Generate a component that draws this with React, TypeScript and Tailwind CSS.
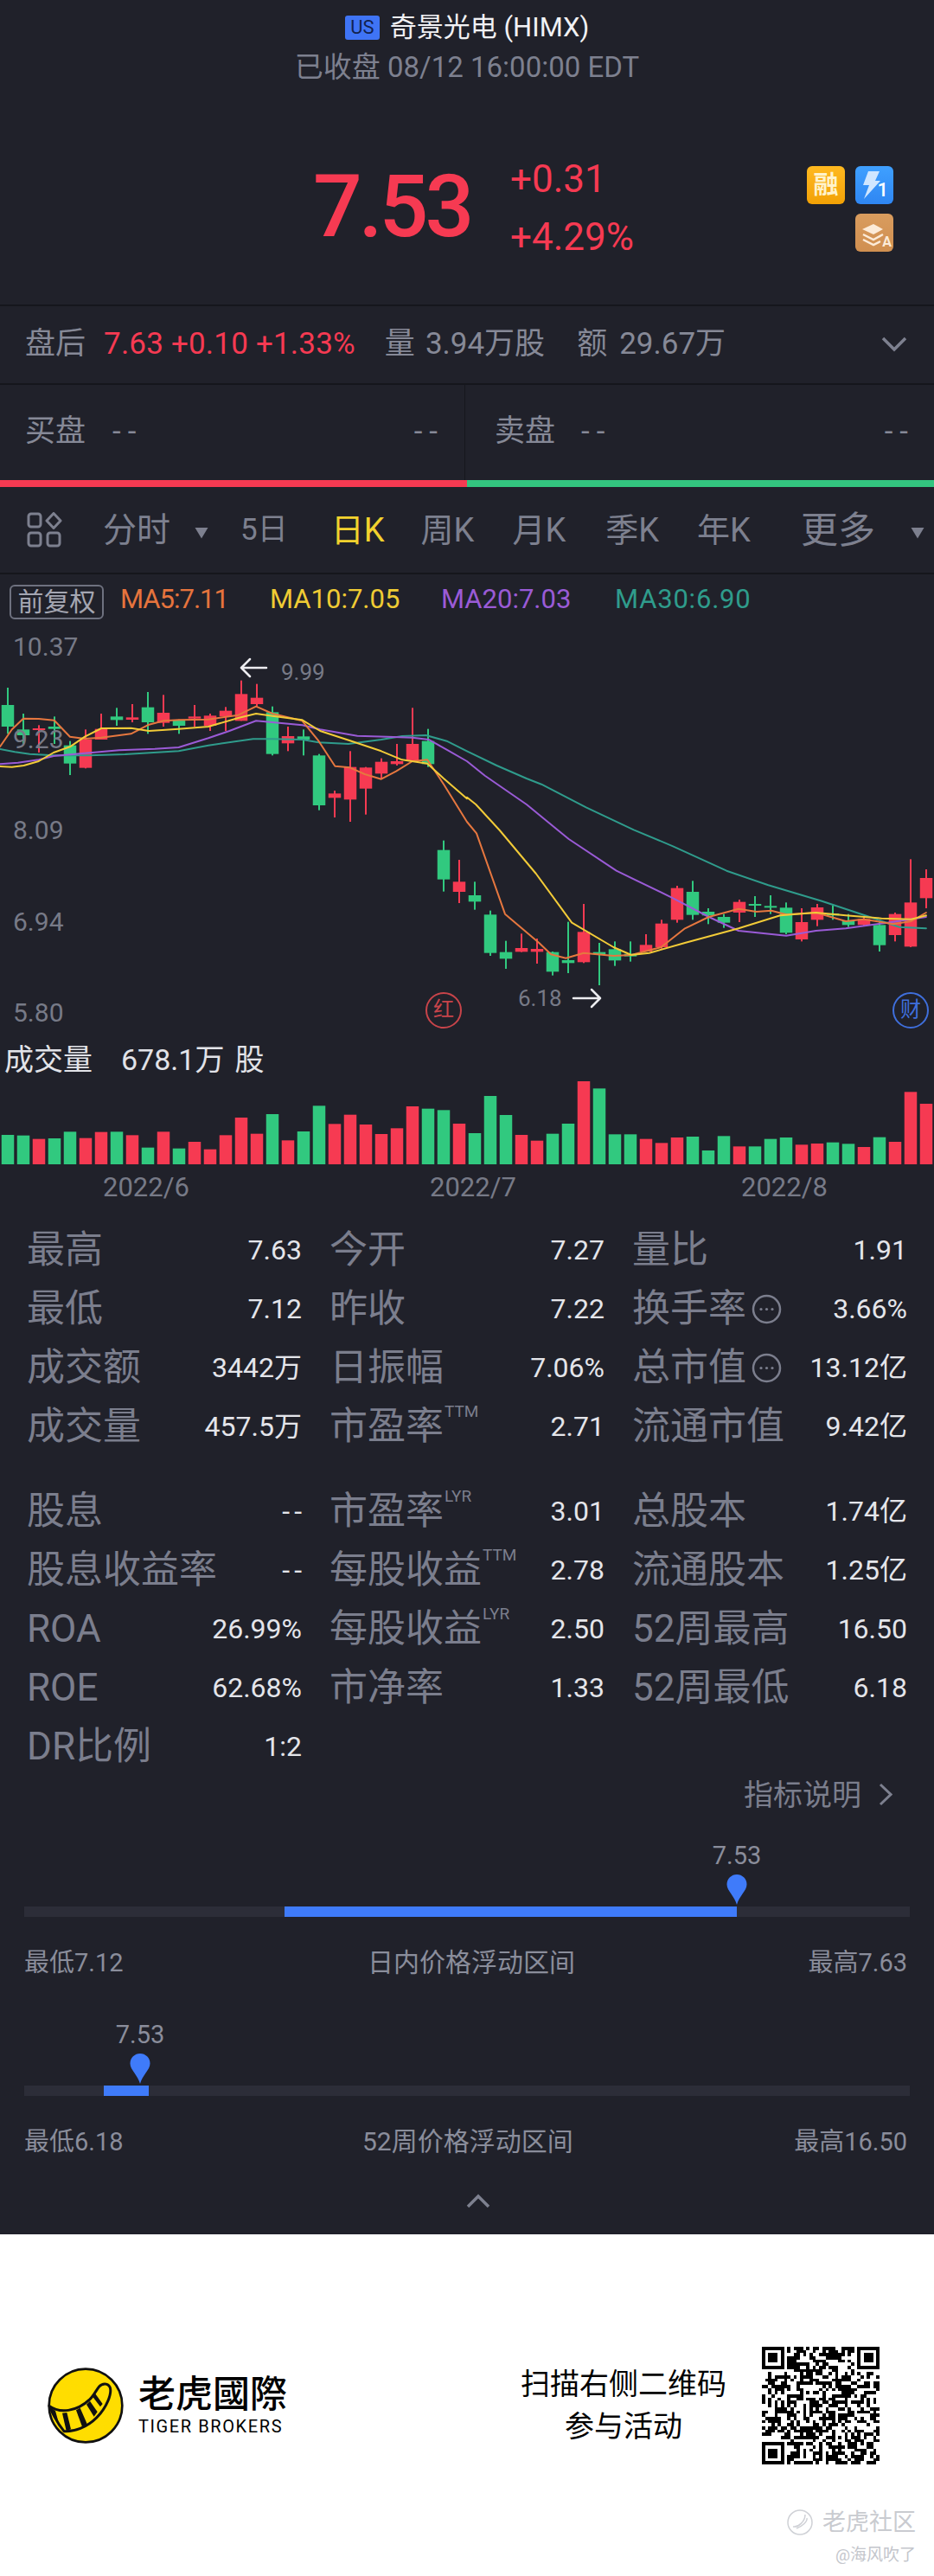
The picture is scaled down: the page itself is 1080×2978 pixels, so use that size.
import React from "react";

const RED = "#F63A52";
const GREEN = "#31C97F";

const z3 = (x: number, y: number) => [x / 2.904, 660 + y / 3];
const z4 = (x: number, y: number) => [540 + x / 2.904, 660 + y / 3];
const z5 = (x: number, y: number) => [x / 1.452, 950 + y / 3];

type Pts = number[][];
const poly = (list: [typeof z3, Pts][]) =>
  list
    .flatMap(([f, pts]) => pts.map((p) => f(p[0], p[1])))
    .map((p) => `${p[0].toFixed(1)},${p[1].toFixed(1)}`)
    .join(" ");

const ma5 = poly([
  [z3, [[0,610],[40,550],[78,512],[130,513],[182,518],[235,575],[285,582],[340,578],[440,565],[500,533],[550,520],[600,517],[700,515],[800,500],[860,470],[915,495],[1015,520],[1070,590],[1125,677],[1175,682],[1225,705],[1280,722],[1330,695],[1385,660],[1435,655],[1490,740],[1568,870]]],
  [z5, [[800,40],[848,320],[905,420],[925,460],[950,473],[980,455],[1030,465],[1060,462],[1110,435],[1150,370],[1190,330],[1240,302],[1270,312],[1295,308],[1320,322],[1370,315],[1420,345],[1450,338],[1500,355],[1530,345],[1555,315]]],
]);
const ma10 = poly([
  [z3, [[0,678],[40,680],[80,675],[130,660],[180,630],[235,610],[285,575],[340,546],[440,545],[500,555],[600,548],[700,540],[800,510],[860,495],[915,503],[1015,517],[1075,555],[1180,590],[1280,625],[1350,655],[1435,668],[1490,720],[1568,790]]],
  [z4, [[0,785],[30,810],[110,900]]],
  [z5, [[900,180],[960,350],[1030,435],[1060,462],[1090,455],[1150,420],[1240,370],[1310,325],[1370,315],[1420,325],[1480,335],[1530,338],[1555,325]]],
]);
const ma20 = poly([
  [z3, [[0,670],[60,665],[130,655],[180,642],[285,632],[400,622],[520,617],[600,612],[700,580],[770,555],[860,520],[915,525],[1015,535],[1075,550],[1200,572],[1300,575],[1385,578],[1440,585],[1500,620],[1568,660]]],
  [z4, [[60,710],[200,810],[300,895]]],
  [z5, [[955,60],[1035,170],[1130,265],[1190,330],[1240,378],[1320,395],[1370,378],[1420,370],[1490,350],[1555,330]]],
]);
const ma30 = poly([
  [z3, [[0,618],[50,628],[100,635],[180,640],[300,640],[420,636],[600,625],[700,605],[850,583],[915,583],[1015,585],[1070,595],[1170,600],[1280,585],[1350,573],[1430,570],[1500,590],[1568,625]]],
  [z4, [[100,675],[200,720],[250,740],[400,820],[560,898]]],
  [z5, [[1130,85],[1220,170],[1290,220],[1380,275],[1460,330],[1510,365],[1555,370]]],
]);

// color, wick top, body top, body bottom, wick bottom
type C = [string, number, number, number, number];
const candlesA: C[] = [
  ["g",405,465,540,565],["g",495,550,570,600],["r",535,546,552,630],["g",505,540,548,600],
  ["g",590,605,668,708],["r",550,585,683,685],["r",495,548,585,585],["g",475,505,517,537],
  ["r",462,508,516,525],["g",420,473,525,565],["r",430,492,527,540],["g",515,518,537,565],
  ["r",465,505,512,540],["r",495,502,537,555],["r",472,485,505,555],["r",380,427,520,520],
  ["r",392,440,462,470],["g",470,490,635,640],["r",540,573,598,625],["g",550,574,585,640],
  ["g",635,640,813,830],["r",762,772,787,855],["r",625,680,793,870],["r",680,682,755,845],
  ["r",650,662,703,720],["r",600,660,670,675],["r",475,600,660,660],["g",548,590,670,680],
];
const candlesB: C[] = [
  ["g",65,98,200,242],["r",132,208,243,282],["g",208,255,277,305],["g",308,322,455,465],
  ["g",413,452,475,510],["r",388,438,451,452],["r",405,441,451,492],["g",450,452,520,533],
  ["g",347,480,490,525],["r",285,382,487,490],["g",420,452,460,567],["g",415,442,481,500],
  ["g",415,458,467,485],["r",390,427,450,450],["r",340,353,435,440],["r",222,230,340,350],
  ["g",205,243,323,340],["g",300,312,325,355],["g",320,330,350,368],["r",270,278,315,348],
  ["g",258,285,290,330],["g",255,292,296,320],["g",280,298,385,390],["r",300,348,408,415],
  ["r",285,297,340,362],["g",290,318,325,340],["g",320,342,358,365],["r",330,337,358,360],
  ["g",345,358,428,450],["r",315,320,393,415],["r",130,280,433,435],["r",165,195,265,300],
];
const candles = [
  ...candlesA.map((c) => ({ c: c[0], v: c.slice(1).map((n) => 660 + (n as number) / 3) })),
  ...candlesB.map((c) => ({ c: c[0], v: c.slice(1).map((n) => 950 + (n as number) / 3) })),
];

const volumes: [string, number][] = [
  ["g",1086],["g",1088],["r",1100],["g",1098],["g",1075],["r",1097],["r",1076],["g",1075],["r",1087],["g",1130],
  ["r",1075],["g",1133],["r",1110],["r",1136],["r",1087],["r",1026],["r",1082],["g",1014],["r",1105],["g",1074],
  ["g",985],["r",1048],["r",1016],["r",1050],["r",1083],["r",1063],["r",987],["g",995],["g",1000],["r",1047],
  ["g",1080],["g",951],["g",1017],["r",1086],["r",1106],["g",1082],["g",1047],["r",876],["g",925],["g",1084],
  ["g",1084],["r",1100],["r",1114],["r",1095],["g",1092],["g",1140],["g",1090],["r",1126],["g",1126],["g",1100],
  ["g",1095],["r",1120],["r",1116],["g",1112],["g",1117],["r",1128],["g",1094],["r",1110],["r",937],["r",978],
];

function qrPath() {
  const n = 37;
  let s = 0x2f6e2b1;
  const rnd = () => {
    s ^= s << 13; s ^= s >>> 17; s ^= s << 5;
    return (s >>> 0) / 4294967296;
  };
  let d = "";
  const inFinder = (x: number, y: number) =>
    (x < 8 && y < 8) || (x >= n - 8 && y < 8) || (x < 8 && y >= n - 8);
  for (let y = 0; y < n; y++)
    for (let x = 0; x < n; x++) {
      const r = rnd();
      if (!inFinder(x, y) && r < 0.52) d += `M${x} ${y}h1v1h-1z`;
    }
  const finder = (x: number, y: number) => {
    d += `M${x} ${y}h7v1h-7zM${x} ${y + 6}h7v1h-7zM${x} ${y + 1}h1v5h-1zM${x + 6} ${y + 1}h1v5h-1zM${x + 2} ${y + 2}h3v3h-3z`;
  };
  finder(0, 0);
  finder(n - 7, 0);
  finder(0, n - 7);
  return d;
}
const QR = qrPath();

function Triangle({ className }: { className: string }) {
  return (
    <svg className={className} width="16" height="14" viewBox="0 0 16 14">
      <path d="M0.5 1 L15.5 1 L8 13.5 Z" fill="#7D808F" />
    </svg>
  );
}

function PriceChart() {
  return (
    <svg className="block w-full h-full" viewBox="0 720 1080 480">
      {candles.map((k, i) => {
        const x = 9 + 18 * i;
        const col = k.c === "r" ? RED : GREEN;
        return (
          <g key={i}>
            <rect x={x - 1} y={k.v[0]} width="2" height={k.v[3] - k.v[0]} fill={col} />
            <rect x={x - 7.25} y={k.v[1]} width="14.5" height={Math.max(k.v[2] - k.v[1], 2)} fill={col} />
          </g>
        );
      })}
      <g fill="none" strokeWidth="2" strokeLinejoin="round" strokeLinecap="round">
        <polyline points={ma30} stroke="#2F9C8C" />
        <polyline points={ma20} stroke="#9A5BD6" />
        <polyline points={ma5} stroke="#E6773F" />
        <polyline points={ma10} stroke="#F2CB38" />
      </g>
      <g fill="none" stroke="#ECECF0" strokeWidth="2.5" strokeLinecap="round" strokeLinejoin="round">
        <path d="M279 772H308M289 762L279 772L289 782" />
        <path d="M663 1154H694M684 1144L694 1154L684 1164" />
      </g>
    </svg>
  );
}

function VolumeChart() {
  return (
    <svg className="block w-full h-full" viewBox="0 1250 1080 96">
      {volumes.map(([c, z], i) => {
        const y = 950 + z / 3;
        return <rect key={i} x={1.75 + 18 * i} y={y} width="14.5" height={1346 - y} fill={c === "r" ? RED : GREEN} />;
      })}
    </svg>
  );
}

const YLabel = ({ top, children }: { top: string; children: React.ReactNode }) => (
  <span className={`absolute left-[15px] text-[30px] leading-[36px] text-[#777A87] ${top}`}>{children}</span>
);

type Stat = { l: string; v: string; sup?: string; info?: boolean };

function InfoIcon() {
  return (
    <svg className="ml-[6px] shrink-0" width="35" height="35" viewBox="0 0 35 35">
      <circle cx="17.5" cy="17.5" r="15.5" fill="none" stroke="#7B7E8D" strokeWidth="2.5" />
      <circle cx="11" cy="17.5" r="1.6" fill="#7B7E8D" />
      <circle cx="17.5" cy="17.5" r="1.6" fill="#7B7E8D" />
      <circle cx="24" cy="17.5" r="1.6" fill="#7B7E8D" />
    </svg>
  );
}

function StatCell({ s }: { s?: Stat }) {
  if (!s) return <div />;
  return (
    <div className="h-[68px] flex items-center justify-between">
      <div className="flex items-center text-[44px] leading-[68px] text-[#7B7E8D] whitespace-nowrap">
        <span>{s.l}</span>
        {s.sup && <span className="self-start text-[19px] leading-[28px] mt-[3px] ml-[1px]">{s.sup}</span>}
        {s.info && <InfoIcon />}
      </div>
      {s.v === "--" ? (
        <span className="text-[32px] leading-[68px] text-[#E4E5EA] tracking-[5px] mr-[-5px] whitespace-nowrap">--</span>
      ) : (
        <span className="text-[32px] leading-[68px] text-[#E4E5EA] whitespace-nowrap">{s.v}</span>
      )}
    </div>
  );
}

const block1: Stat[] = [
  { l: "最高", v: "7.63" }, { l: "今开", v: "7.27" }, { l: "量比", v: "1.91" },
  { l: "最低", v: "7.12" }, { l: "昨收", v: "7.22" }, { l: "换手率", v: "3.66%", info: true },
  { l: "成交额", v: "3442万" }, { l: "日振幅", v: "7.06%" }, { l: "总市值", v: "13.12亿", info: true },
  { l: "成交量", v: "457.5万" }, { l: "市盈率", v: "2.71", sup: "TTM" }, { l: "流通市值", v: "9.42亿" },
];
const block2: (Stat | undefined)[] = [
  { l: "股息", v: "--" }, { l: "市盈率", v: "3.01", sup: "LYR" }, { l: "总股本", v: "1.74亿" },
  { l: "股息收益率", v: "--" }, { l: "每股收益", v: "2.78", sup: "TTM" }, { l: "流通股本", v: "1.25亿" },
  { l: "ROA", v: "26.99%" }, { l: "每股收益", v: "2.50", sup: "LYR" }, { l: "52周最高", v: "16.50" },
  { l: "ROE", v: "62.68%" }, { l: "市净率", v: "1.33" }, { l: "52周最低", v: "6.18" },
  { l: "DR比例", v: "1:2" }, undefined, undefined,
];

function Pin() {
  return (
    <svg width="24" height="35" viewBox="0 0 24 35">
      <path d="M12 35C9.5 25 0.5 19 0.5 11.5A11.5 11.5 0 0 1 23.5 11.5C23.5 19 14.5 25 12 35Z" fill="#3F7BFA" />
    </svg>
  );
}

function RangeBar(p: { pin: number; a: number; b: number; midX: number; low: string; mid: string; high: string }) {
  return (
    <div className="px-[28px]">
      <div className="flex flex-col items-center w-[60px]" style={{ marginLeft: p.pin - 30 - 28 }}>
        <span className="h-[36px] text-[29px] leading-[36px] text-[#8A8D9B]">7.53</span>
        <div className="mt-[4px] h-[35px]"><Pin /></div>
      </div>
      <div className="mt-[2px] h-[12px] bg-[#2C2D38] flex">
        <div className="h-full bg-[#3F7BFA]" style={{ marginLeft: p.a - 28, width: p.b - p.a }} />
      </div>
      <div className="mt-[33px] h-[40px] flex items-center text-[29px] leading-[40px] text-[#8A8D9B] pr-[3px] whitespace-nowrap">
        <span style={{ width: p.midX - 28 }}>{p.low}</span>
        <span className="text-[30px]">{p.mid}</span>
        <span className="ml-auto">{p.high}</span>
      </div>
    </div>
  );
}

function TigerLogo() {
  return (
    <svg width="88" height="88" viewBox="30 22 262 264" className="shrink-0">
      <circle cx="161" cy="154" r="127" fill="#FFDD00" stroke="#111" strokeWidth="8" />
      <path
        d="M35 155C70 182 130 176 176 132C190 118 198 100 208 88C218 76 240 74 246 92C252 112 236 158 200 195C165 230 120 246 86 243C72 226 50 190 35 155Z"
        fill="#FFDD00"
        stroke="#111"
        strokeWidth="9"
        strokeLinejoin="round"
      />
      <path d="M35 155C42 163 48 168 56 172L70 222C56 200 44 178 35 155Z" fill="#111" />
      <path d="M80 180L96 178L110 236L94 242Z" fill="#111" />
      <path d="M128 170L142 162L168 222L150 230Z" fill="#111" />
      <path d="M164 150L176 138L202 176L190 192Z" fill="#111" />
      <path d="M186 124L194 112L220 148L212 158Z" fill="#111" />
    </svg>
  );
}

const F = "font-['Roboto','Noto_Sans_CJK_SC',sans-serif]";

const Dash = () => <span className="tracking-[8px] mr-[-8px] whitespace-nowrap">--</span>;

export default function App() {
  return (
    <div className={`w-[1080px] h-[2978px] bg-white flex flex-col ${F}`}>
      <div className="h-[2583px] bg-[#20212A] flex flex-col">
        {/* header */}
        <div className="h-[354px] border-b-2 border-[#15161C] pt-[18px]">
          <div className="h-[28px] flex items-center justify-center gap-[12px]">
            <span className="w-[40px] h-[28px] rounded-[3px] bg-[#3F74F5] text-[#12224F] text-[22px] leading-[28px] text-center">US</span>
            <span className="text-[31px] leading-[36px] text-[#F1F1F4]">奇景光电 (HIMX)</span>
          </div>
          <div className="mt-[16px] h-[32px] text-center text-[33px] leading-[32px] text-[#7D808F]">已收盘 08/12 16:00:00 EDT</div>
          <div className="mt-[96px] h-[101px] flex pl-[362px]">
            <div className="w-[228px] h-[96px] mt-[1px] text-[100px] leading-[96px] font-medium tracking-[-4px]" style={{ color: RED }}>7.53</div>
            <div className="flex flex-col text-[44px] leading-[34px]" style={{ color: RED }}>
              <span>+0.31</span>
              <span className="mt-[33px]">+4.29%</span>
            </div>
            <div className="ml-auto mr-[47px] flex flex-col items-end gap-[11px] mt-[2px]">
              <div className="flex gap-[12px]">
                <div className="w-[44px] h-[44px] rounded-[6px] bg-linear-to-b from-[#FFB91F] to-[#F2A105] text-[#FFF3CC] text-[29px] leading-[44px] text-center font-bold">融</div>
                <div className="w-[44px] h-[44px] rounded-[6px] bg-linear-to-b from-[#3FA0FF] to-[#2F86F2] flex items-center relative">
                  <svg width="44" height="44" viewBox="0 0 44 44">
                    <path d="M15 6H28L23 17H29L10 38L16 22H9Z" fill="#CFE6FF" />
                  </svg>
                  <span className="absolute right-[6px] bottom-[5px] text-[22px] leading-[22px] text-white font-medium">1</span>
                </div>
              </div>
              <div className="w-[44px] h-[44px] rounded-[6px] bg-linear-to-b from-[#D99C5E] to-[#D08F50] relative">
                <svg width="44" height="44" viewBox="0 0 44 44">
                  <path d="M21 12L32 18L21 24L8 18Z" fill="#FCEBD8" />
                  <path d="M9 24L21 30L32 24M9 30L21 36L29 32" fill="none" stroke="#FCEBD8" strokeWidth="2.5" />
                </svg>
                <span className="absolute right-[2px] bottom-[2px] text-[16px] leading-[18px] font-bold text-[#FCEBD8]">A</span>
              </div>
            </div>
          </div>
        </div>

        {/* after hours */}
        <div className="h-[91px] border-b-2 border-[#15161C] flex items-center pl-[29px] pr-[31px] pb-[2px] text-[35px] leading-[40px] text-[#868997] whitespace-nowrap">
          <span>盘后</span>
          <span className="ml-[21px] tracking-[0.2px]" style={{ color: RED }}>7.63 +0.10 +1.33%</span>
          <span className="ml-[34px]">量</span>
          <span className="ml-[12px]">3.94万股</span>
          <span className="ml-[37px]">额</span>
          <span className="ml-[14px]">29.67万</span>
          <svg className="ml-auto" width="30" height="18" viewBox="0 0 30 18">
            <path d="M2 2L15 15L28 2" fill="none" stroke="#7D808F" strokeWidth="3.5" />
          </svg>
        </div>

        {/* bid ask */}
        <div className="h-[110px] flex text-[35px] leading-[40px] text-[#868997]">
          <div className="w-[538px] border-r border-[#15161C] flex items-center justify-between pl-[29px] pr-[31px] pb-[2px]">
            <div className="flex items-center"><span>买盘</span><span className="ml-[31px] mr-[8px]"><Dash /></span></div>
            <Dash />
          </div>
          <div className="flex-1 flex items-center justify-between pl-[34px] pr-[30px] pb-[2px]">
            <div className="flex items-center"><span>卖盘</span><span className="ml-[30px] mr-[8px]"><Dash /></span></div>
            <Dash />
          </div>
        </div>
        <div className="h-[8px] flex">
          <div className="w-[540px]" style={{ background: RED }} />
          <div className="flex-1 bg-[#33C57F]" />
        </div>

        {/* toolbar */}
        <div className="h-[101px] border-b-2 border-[#15161C] flex items-center pl-[31px] text-[38px] leading-[44px] text-[#7D808F] whitespace-nowrap">
          <svg width="41" height="41" viewBox="0 0 41 41" fill="none" stroke="#7D808F" strokeWidth="3">
            <rect x="2" y="2" width="14" height="15" rx="3" />
            <path d="M31 1.5L39 10L31 18.5L23 10Z" strokeLinejoin="round" />
            <rect x="2" y="24" width="14" height="15" rx="3" />
            <rect x="24" y="24" width="14" height="15" rx="3" />
          </svg>
          <span className="ml-[47px] text-[39px]">分时</span>
          <Triangle className="ml-[28px] mt-[6px]" />
          <span className="ml-[37px] text-[35px]">5日</span>
          <span className="ml-[50px] text-[#F2D22E]">日K</span>
          <span className="ml-[42px]">周K</span>
          <span className="ml-[44px]">月K</span>
          <span className="ml-[46px]">季K</span>
          <span className="ml-[44px]">年K</span>
          <span className="ml-[58px] text-[43px]">更多</span>
          <Triangle className="ml-[41px] mt-[6px]" />
        </div>

        {/* legend */}
        <div className="h-[56px] pt-[12px] pl-[11px] flex items-start text-[31px] leading-[32px] whitespace-nowrap">
          <span className="w-[109px] h-[40px] rounded-[6px] border-2 border-[#6E717F] text-[#A4A6B2] text-[30px] leading-[36px] text-center">前复权</span>
          <div className="h-[32px] flex mt-[1px]">
            <span className="ml-[19px] w-[173px] text-[#E6743D] tracking-[-1px]">MA5:7.11</span>
            <span className="w-[198px] text-[#EFCB34]">MA10:7.05</span>
            <span className="w-[201px] text-[#9A5BD6]">MA20:7.03</span>
            <span className="text-[#2F9C8C] tracking-[0.8px]">MA30:6.90</span>
          </div>
        </div>

        {/* chart */}
        <div className="relative h-[480px]">
          <PriceChart />
          <YLabel top="top-[10px]">10.37</YLabel>
          <YLabel top="top-[117px]">9.23</YLabel>
          <YLabel top="top-[222px]">8.09</YLabel>
          <YLabel top="top-[328px]">6.94</YLabel>
          <YLabel top="top-[433px]">5.80</YLabel>
          <span className="absolute left-[325px] top-[42px] text-[26px] leading-[30px] text-[#777A87]">9.99</span>
          <span className="absolute left-[599px] top-[419px] text-[26px] leading-[30px] text-[#777A87]">6.18</span>
          <span className="absolute left-[492px] top-[427px] w-[42px] h-[42px] rounded-full border-[2.5px] border-[#C8444A] text-[#C8444A] text-[24px] leading-[36px] text-center">红</span>
          <span className="absolute left-[1032px] top-[427px] w-[42px] h-[42px] rounded-full border-[2.5px] border-[#3F6FDC] text-[#3F6FDC] text-[24px] leading-[36px] text-center">财</span>
        </div>

        {/* volume */}
        <div className="h-[50px] flex items-center pl-[5px] text-[34px] leading-[40px] text-[#E2E3E8] whitespace-nowrap">
          <span>成交量</span>
          <span className="ml-[33px]">678.1万</span>
          <span className="ml-[12px]">股</span>
        </div>
        <div className="h-[96px]"><VolumeChart /></div>
        <div className="h-[65px] pl-[119px] flex items-start text-[31px] leading-[54px] text-[#777A87]">
          <span className="w-[99px] text-center">2022/6</span>
          <span className="w-[99px] text-center ml-[279px]">2022/7</span>
          <span className="w-[99px] text-center ml-[261px]">2022/8</span>
        </div>

        {/* stats */}
        <div className="pl-[31px] grid grid-cols-[318px_318px_318px] gap-x-[32px]">
          {block1.map((s, i) => <StatCell key={i} s={s} />)}
        </div>
        <div className="mt-[30px] pl-[31px] grid grid-cols-[318px_318px_318px] gap-x-[32px]">
          {block2.map((s, i) => <StatCell key={i} s={s} />)}
        </div>
        <div className="h-[40px] pt-[3px] flex items-center justify-end pr-[48px] text-[34px] leading-[40px] text-[#7B7E8D]">
          <span>指标说明</span>
          <svg className="ml-[20px]" width="16" height="27" viewBox="0 0 16 27">
            <path d="M2 2L14 13.5L2 25" fill="none" stroke="#7D808F" strokeWidth="3" />
          </svg>
        </div>

        {/* ranges */}
        <div className="mt-[34px]">
          <RangeBar pin={852} a={329} b={852} midX={425} low="最低7.12" mid="日内价格浮动区间" high="最高7.63" />
        </div>
        <div className="mt-[45px]">
          <RangeBar pin={162} a={120} b={172} midX={419} low="最低6.18" mid="52周价格浮动区间" high="最高16.50" />
        </div>
        <div className="flex-1 flex items-start justify-center pl-[26px] pt-[40px]">
          <svg width="28" height="17" viewBox="0 0 28 17">
            <path d="M2 15L14 3L26 15" fill="none" stroke="#7D808F" strokeWidth="3.5" />
          </svg>
        </div>
      </div>

      {/* promo */}
      <div className="flex-1 flex flex-col">
        <div className="mt-[130px] h-[135px] flex items-center pl-[55px]">
          <TigerLogo />
          <div className="ml-[17px] w-[171px] flex flex-col text-black whitespace-nowrap">
            <span className="text-[43px] leading-[48px] font-medium">老虎國際</span>
            <span className="text-[20px] leading-[24px] tracking-[1.6px] mt-[1px]">TIGER BROKERS</span>
          </div>
          <div className="ml-[272px] w-[236px] flex flex-col items-center text-[34px] leading-[49px] text-black whitespace-nowrap">
            <span>扫描右侧二维码</span>
            <span>参与活动</span>
          </div>
          <svg className="ml-[42px]" width="136" height="136" viewBox="0 0 37 37" shapeRendering="crispEdges">
            <path d={QR} fill="#000" />
          </svg>
        </div>
        <div className="mt-[54px] pr-[21px] flex flex-col items-end">
          <div className="h-[28px] flex items-center text-[27px] leading-[28px] text-[#C9CBD0] whitespace-nowrap">
            <svg className="mr-[10px]" width="32" height="30" viewBox="0 0 32 30" fill="none" stroke="#CFD1D6" strokeWidth="1.5">
              <circle cx="16" cy="15" r="14" />
              <path d="M8 20C14 21 22 14 22 6M12 22C18 20 25 14 24 10" />
            </svg>
            <span>老虎社区</span>
          </div>
          <span className="mt-[13px] text-[19px] leading-[22px] text-[#C4C6CC] whitespace-nowrap">@海风吹了</span>
        </div>
      </div>
    </div>
  );
}
